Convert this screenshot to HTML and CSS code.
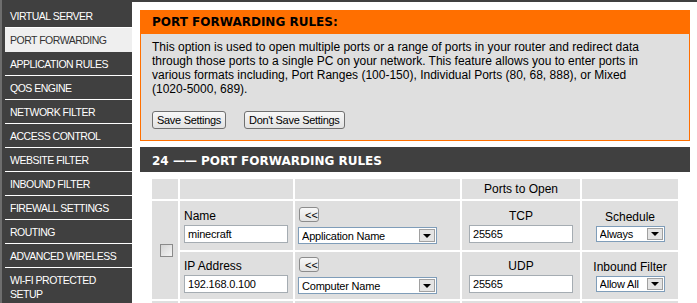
FILE: index.html
```html
<!DOCTYPE html>
<html>
<head>
  <meta charset="UTF-8">
  <title>Port Forwarding</title>
  <link rel="stylesheet" href="styles.css">
</head>
<body>
  <div class="page">
    <div class="sidenav">
      <ul>
        <li>VIRTUAL SERVER</li>
        <li class="active">PORT FORWARDING</li>
        <li>APPLICATION RULES</li>
        <li>QOS ENGINE</li>
        <li>NETWORK FILTER</li>
        <li>ACCESS CONTROL</li>
        <li>WEBSITE FILTER</li>
        <li>INBOUND FILTER</li>
        <li>FIREWALL SETTINGS</li>
        <li>ROUTING</li>
        <li>ADVANCED WIRELESS</li>
        <li>WI-FI PROTECTED SETUP</li>
      </ul>
    </div>

    <div class="content">
      <div class="intro">
        <h2>PORT FORWARDING RULES:</h2>
        <div class="intro-body">
          <p>This option is used to open multiple ports or a range of ports in your router and redirect data<br>
          through those ports to a single PC on your network. This feature allows you to enter ports in<br>
          various formats including, Port Ranges (100-150), Individual Ports (80, 68, 888), or Mixed<br>
          (1020-5000, 689).</p>
          <div class="buttons">
            <button class="btn">Save Settings</button>
            <button class="btn">Don't Save Settings</button>
          </div>
        </div>
      </div>

      <div class="rules">
        <h2>24 —— PORT FORWARDING RULES</h2>
        <table>
          <colgroup>
            <col class="c-check">
            <col class="c-name">
            <col class="c-pick">
            <col class="c-ports">
            <col class="c-sched">
          </colgroup>
          <tr class="head">
            <td></td>
            <td></td>
            <td></td>
            <td>Ports to Open</td>
            <td></td>
          </tr>

          <tr class="rule-top">
            <td rowspan="2" class="check"><input type="checkbox"></td>
            <td class="field">
              <div class="label">Name</div>
              <input class="text" type="text" value="minecraft">
            </td>
            <td class="pick">
              <button class="copy">&lt;&lt;</button>
              <div class="dropdown wide"><select><option>Application Name</option></select><span class="arrow"></span></div>
            </td>
            <td class="center">
              <div class="label">TCP</div>
              <input class="text" type="text" value="25565">
            </td>
            <td class="center">
              <div class="label">Schedule</div>
              <div class="dropdown small"><select><option>Always</option></select><span class="arrow"></span></div>
            </td>
          </tr>
          <tr class="rule-bottom">
            <td class="field">
              <div class="label">IP Address</div>
              <input class="text" type="text" value="192.168.0.100">
            </td>
            <td class="pick">
              <button class="copy">&lt;&lt;</button>
              <div class="dropdown wide"><select><option>Computer Name</option></select><span class="arrow"></span></div>
            </td>
            <td class="center">
              <div class="label">UDP</div>
              <input class="text" type="text" value="25565">
            </td>
            <td class="center">
              <div class="label">Inbound Filter</div>
              <div class="dropdown small"><select><option>Allow All</option></select><span class="arrow"></span></div>
            </td>
          </tr>

          <!-- siguiente regla (fuera de la vista) -->
          <tr class="rule-top">
            <td></td>
            <td></td>
            <td></td>
            <td></td>
            <td></td>
          </tr>
        </table>
      </div>
    </div>
  </div>
</body>
</html>
```

FILE: styles.css
```css
body {
  margin: 0;
  font-family: "Liberation Sans", Arial, sans-serif;
  font-size: 12px;
  color: #000000;
  background-color: #ffffff;
  overflow: hidden;
}

.page {
  display: flex;
  align-items: stretch;
  min-height: 303px;
}

/* menu lateral */
.sidenav {
  width: 130px;
  border-left: 2px solid #6e6e6e;
  background-color: #404040;
  padding-top: 4px;
}

.sidenav ul {
  list-style: none;
  margin: 0;
  padding: 0;
}

.sidenav li {
  margin-left: 3px;
  padding: 5px 5px 4px;
  line-height: 14px;
  font-size: 10.5px;
  letter-spacing: -0.5px;
  color: #ffffff;
  border-bottom: 1px solid #ffffff;
}

.sidenav li.active {
  background-color: #efefef;
  color: #333333;
  border-bottom-color: #efefef;
}

.content {
  flex: 1;
  border-top: 2px solid #404040;
  padding: 8px 7px 0 8px;
}

/* caja naranja */
.intro {
  border: 1px solid #ff6f00;
  background-color: #dfdfdf;
}

.intro h2,
.rules h2 {
  margin: 0;
  font-family: "DejaVu Sans", Verdana, sans-serif;
  font-size: 12px;
  font-weight: bold;
}

.intro h2 {
  height: 23px;
  line-height: 23px;
  padding-left: 11px;
  background-color: #ff6f00;
  color: #000000;
}

.intro-body {
  padding: 6px 11px 11px;
}

.intro-body p {
  margin: 0;
  line-height: 14px;
}

.buttons {
  margin-top: 15px;
  display: flex;
  gap: 18px;
}

.btn,
.copy {
  font-family: "Liberation Sans", Arial, sans-serif;
  font-size: 11px;
  color: #000000;
  border: 1px solid #707070;
  border-radius: 3px;
  background: linear-gradient(#f8f8f8, #e2e2e2);
}

.btn {
  height: 18px;
  padding: 0 4px;
  letter-spacing: -0.3px;
}

/* tabla de reglas */
.rules {
  margin-top: 6px;
}

.rules h2 {
  box-sizing: border-box;
  height: 25px;
  padding: 3px 0 0 12px;
  line-height: 22px;
  background-color: #404040;
  color: #ffffff;
}

.rules table {
  margin: 5px 0 0 10px;
  width: 530px;
  table-layout: fixed;
  border-spacing: 2px;
}

.c-check { width: 26px; }
.c-name { width: 113px; }
.c-pick { width: 165px; }
.c-ports { width: 118px; }
.c-sched { width: 96px; }

.rules td {
  background-color: #dfdfdf;
  padding: 0;
  vertical-align: middle;
}

.head td {
  height: 20px;
  text-align: center;
}

.rule-top td {
  height: 49px;
}

.rule-bottom td {
  height: 47px;
}

.label {
  line-height: 14px;
  margin-bottom: 2px;
}

.field {
  padding-left: 4px !important;
}

.center {
  text-align: center;
}

.check {
  text-align: center;
}

.check input {
  appearance: none;
  width: 13px;
  height: 13px;
  margin: 0 0 0 2px;
  border: 1px solid #8a8a8a;
  background: linear-gradient(135deg, #d4d4d4, #f4f4f4);
  vertical-align: middle;
}

.text {
  box-sizing: border-box;
  width: 104px;
  height: 18px;
  padding: 0 3px;
  border: 1px solid #a5acb2;
  font-family: "Liberation Sans", Arial, sans-serif;
  font-size: 11px;
  letter-spacing: -0.2px;
}

.pick {
  padding-left: 3px !important;
}

.copy {
  display: block;
  box-sizing: border-box;
  width: 20px;
  height: 15px;
  margin: 0 0 5px 1px;
  padding: 0 0 0 5px;
  text-align: left;
  overflow: hidden;
  white-space: nowrap;
  border-color: #8c8c8c;
}

.dropdown {
  display: inline-flex;
  box-sizing: border-box;
  border: 1px solid #7f9db9;
  background-color: #ffffff;
  vertical-align: top;
}

.dropdown.wide {
  width: 139px;
  height: 17px;
}

.dropdown.small {
  width: 69px;
  height: 16px;
}

.dropdown select {
  appearance: none;
  flex: 1;
  min-width: 0;
  border: none;
  background: transparent;
  padding: 0 0 0 3px;
  margin: 0;
  font-family: "Liberation Sans", Arial, sans-serif;
  font-size: 11px;
  letter-spacing: -0.2px;
  color: #000000;
}

.dropdown .arrow {
  position: relative;
  width: 14px;
  margin: 1px;
  border: 1px solid #a0a0a0;
  background-color: #e4e4e4;
}

.dropdown .arrow::after {
  content: "";
  position: absolute;
  left: 3px;
  bottom: 3px;
  border-left: 4px solid transparent;
  border-right: 4px solid transparent;
  border-top: 4px solid #000000;
}
```
